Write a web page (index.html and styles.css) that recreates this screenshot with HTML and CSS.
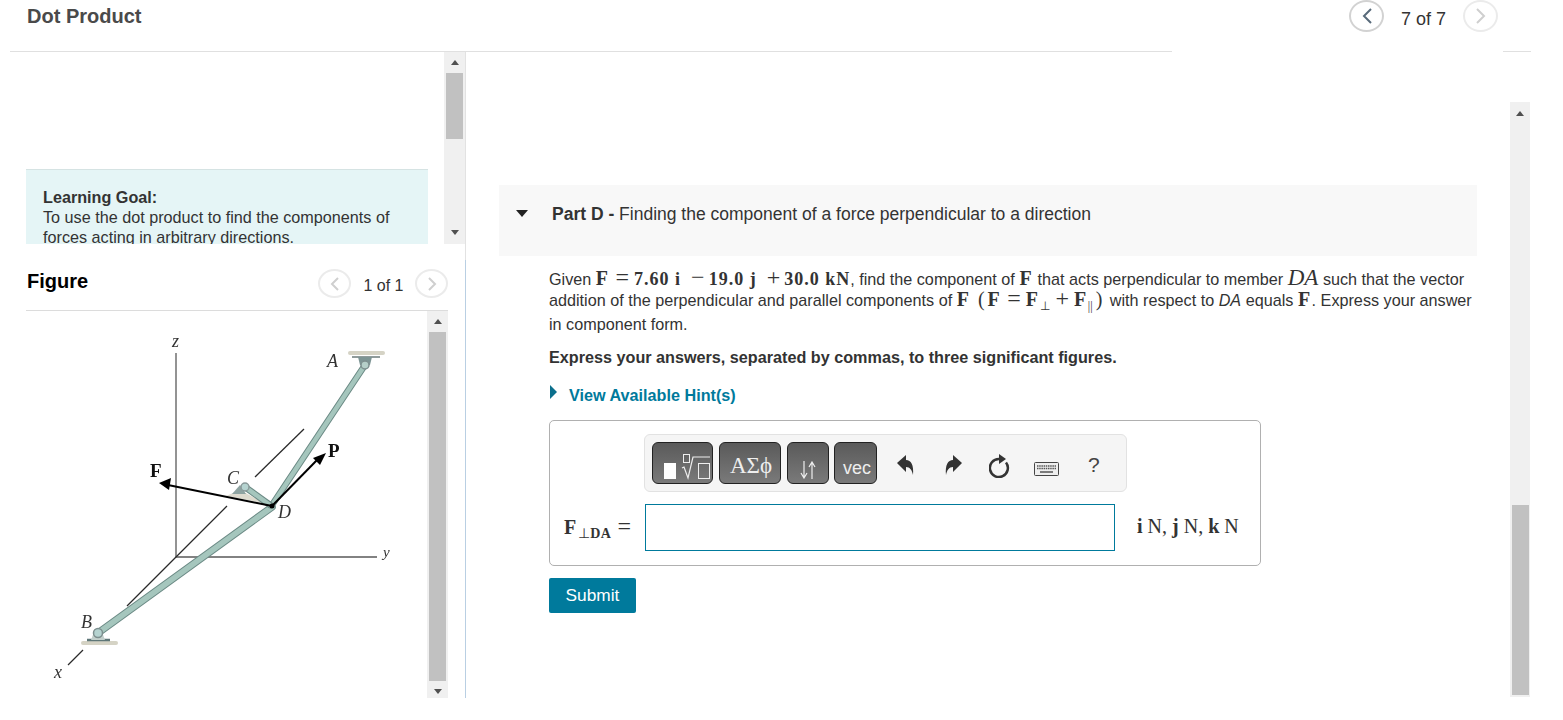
FILE: index.html
```html
<!DOCTYPE html>
<html lang="en">
<head>
    <meta charset="UTF-8">
    <meta name="viewport" content="width=device-width, initial-scale=1.0">
    <title>Dot Product</title>
    <link rel="stylesheet" href="styles.css">
</head>
<body>
    <header class="top-bar">
        <div class="top-title"><h1>Dot Product</h1></div>
        <div class="top-pager">
            <span class="circle circle-active">
                <svg width="12" height="18" viewBox="0 0 12 18"><path d="M10 2 3 9l7 7" fill="none" stroke="#586a7a" stroke-width="2"/></svg>
            </span>
            <span class="pager-count">7 of 7</span>
            <span class="circle">
                <svg width="12" height="18" viewBox="0 0 12 18"><path d="m2 2 7 7-7 7" fill="none" stroke="#cfcfcf" stroke-width="2"/></svg>
            </span>
        </div>
        <div class="top-end"></div>
    </header>

    <div class="main">
        <aside class="left">
            <div class="intro-wrap">
                <div class="intro">
                    <div class="intro-view">
                        <div class="goal">
                            <strong>Learning Goal:</strong><br>
                            To use the dot product to find the components of<br>
                            forces acting in arbitrary directions.
                        </div>
                    </div>
                    <div class="scrollbar intro-scroll">
                        <span class="arrow-up"></span>
                        <span class="thumb"></span>
                        <span class="scroll-fill"></span>
                        <span class="arrow-down"></span>
                    </div>
                </div>
            </div>

            <div class="figure">
                <div class="figure-head">
                    <h2>Figure</h2>
                    <div class="figure-pager">
                        <span class="circle small">
                            <svg width="10" height="14" viewBox="0 0 10 14"><path d="M8 1 2 7l6 6" fill="none" stroke="#cfcfcf" stroke-width="2"/></svg>
                        </span>
                        <span class="figure-count">1 of 1</span>
                        <span class="circle small">
                            <svg width="10" height="14" viewBox="0 0 10 14"><path d="m2 1 6 6-6 6" fill="none" stroke="#cfcfcf" stroke-width="2"/></svg>
                        </span>
                    </div>
                </div>
                <div class="figure-body">
                    <svg class="diagram" width="401" height="387" viewBox="26 311 401 387">
                        <!-- axes -->
                        <path d="M176 353V557H377" stroke="#5a5a5a" stroke-width="1.300" fill="none"/>
                        <g stroke="#2a2a2a" stroke-width="1.300" fill="none">
                            <path d="M227 506 176 557 127 606"/>
                            <path d="M83 650 68 665"/>
                            <path d="M255 477 304 429"/>
                        </g>
                        <!-- supports -->
                        <rect x="348" y="351" width="37" height="4" rx="2" fill="#d5d3c5"/>
                        <path d="M352 357H380" stroke="#6b7a7a" stroke-width="1.500"/>
                        <path d="M358 357h14l-2 8h-10z" fill="#7d9494"/>
                        <rect x="81" y="641" width="37" height="4" rx="2" fill="#d5d3c5"/>
                        <path d="M87 640h23" stroke="#5f7778" stroke-width="2.500"/>
                        <path d="M91 640l3-8h8l3 8z" fill="#c2cfcb"/>
                        <path d="M226 496 240 490 264 503Z" fill="#dedbcf"/>
                        <path d="M232 494l8-9 6 9z" fill="#8ea3a1"/>
                        <!-- members -->
                        <g fill="none" stroke-linecap="round">
                            <path d="M365 365 272 505" stroke="#6b8a85" stroke-width="6.500"/>
                            <path d="M365 365 272 505" stroke="#a5c6bd" stroke-width="4.500"/>
                            <path d="M98 633 272 507" stroke="#6b8a85" stroke-width="7.500"/>
                            <path d="M98 633 272 507" stroke="#a5c6bd" stroke-width="5.500"/>
                            <path d="M245 487 270 505" stroke="#6b8a85" stroke-width="6.500"/>
                            <path d="M245 487 270 505" stroke="#a5c6bd" stroke-width="4.500"/>
                        </g>
                        <circle cx="365" cy="365" r="4" fill="#b5cfc9" stroke="#7d8f8f" stroke-width="1.500"/>
                        <circle cx="98" cy="633" r="4.500" fill="#b5d3d0" stroke="#7d8f8f" stroke-width="1.500"/>
                        <circle cx="245" cy="487" r="4" fill="#b5d3d0" stroke="#8a9a9a" stroke-width="1.500"/>
                        <!-- forces -->
                        <g stroke="#000" stroke-width="2" fill="none">
                            <path d="M272 506 168 485"/>
                            <path d="M272 506 318 459"/>
                        </g>
                        <path d="M159 483 171 478 169 490z" fill="#000"/>
                        <path d="M326 453 320 465 313 458z" fill="#000"/>
                        <circle cx="272" cy="506" r="2.500" fill="#000"/>
                        <!-- labels -->
                        <g class="fig-label">
                            <text x="172" y="347">z</text>
                            <text x="327" y="367">A</text>
                            <text x="227" y="484">C</text>
                            <text x="278" y="518">D</text>
                            <text class="fig-small" x="383" y="557">y</text>
                            <text x="81" y="628">B</text>
                            <text x="54" y="678">x</text>
                        </g>
                        <g class="fig-force">
                            <text x="150" y="477">F</text>
                            <text x="328" y="457">P</text>
                        </g>
                    </svg>
                    <div class="scrollbar figure-scroll">
                        <span class="arrow-up"></span>
                        <span class="thumb"></span>
                        <span class="arrow-down"></span>
                    </div>
                </div>
            </div>
        </aside>

        <section class="right">
            <div class="content">
                <div class="part-head">
                    <span class="part-toggle"></span>
                    <span class="part-title"><strong>Part D -</strong> Finding the component of a force perpendicular to a direction</span>
                </div>
                <div class="part-body">
                    <div class="prompt-line">Given <b class="m cap">F</b><span class="op">=</span><b class="m">7.60 i</b><span class="op wide">&minus;</span><b class="m">19.0 j</b><span class="op wide">+</span><b class="m">30.0 kN</b>, find the component of <b class="m cap">F</b> that acts perpendicular to member <i class="mi">DA</i> such that the vector</div>
                    <div class="prompt-line tall">addition of the perpendicular and parallel components of <b class="m cap">F</b> <span class="mt">(</span><b class="m cap">F</b><span class="op">=</span><b class="m cap">F</b><sub class="sub">&perp;</sub><span class="op">+</span><b class="m cap">F</b><sub class="sub">||</sub><span class="mt">)</span> with respect to <i>DA</i> equals <b class="m cap">F</b>. Express your answer</div>
                    <div class="prompt-line">in component form.</div>
                    <p class="instruction">Express your answers, separated by commas, to three significant figures.</p>
                    <div class="hint"><span class="hint-toggle"></span>View Available Hint(s)</div>

                    <div class="answer-box">
                        <div class="toolbar">
                            <span class="tool tool-templates">
                                <svg width="59" height="40" viewBox="0 0 59 40">
                                    <rect x="11" y="20" width="12" height="16" fill="#fff"/>
                                    <rect x="30.500" y="11.500" width="6" height="8" fill="none" stroke="#eee"/>
                                    <path d="M29 25l2-1 4 11 5-21h17" fill="none" stroke="#eee" stroke-width="1.200"/>
                                    <rect x="45.500" y="20.500" width="11" height="15" fill="none" stroke="#eee"/>
                                </svg>
                            </span>
                            <span class="tool tool-greek">&Alpha;&Sigma;&#981;</span>
                            <span class="tool tool-arrows">
                                <svg width="18" height="18" viewBox="0 0 18 18">
                                    <path d="M5 0v17M2 12l3 5 3-5M13 18V1M10 6l3-5 3 5" fill="none" stroke="#eee" stroke-width="1.200"/>
                                </svg>
                            </span>
                            <span class="tool tool-vec">vec</span>
                            <svg class="action action-undo" width="17" height="20" viewBox="0 0 17 20"><path d="M0 8 9 0v5c5 0 8 5 7 15-1-5-3-8-7-8v5z" fill="#333"/></svg>
                            <svg class="action action-redo" width="17" height="20" viewBox="0 0 17 20"><path d="M17 8 8 0v5C3 5 0 10 1 20c1-5 3-8 7-8v5z" fill="#333"/></svg>
                            <svg class="action action-reset" width="22" height="24" viewBox="0 0 22 24"><path d="M17 8.500A9 9 0 1 1 10 5" fill="none" stroke="#333" stroke-width="2.500"/><path d="M10 0l7 5-7 5z" fill="#333"/></svg>
                            <svg class="action action-keys" width="25" height="14" viewBox="0 0 25 14">
                                <rect x=".5" y=".5" width="24" height="13" rx="1" fill="#eee" stroke="#444"/>
                                <path d="M3 4h19M3 6.500h19" stroke="#555" stroke-width="1.500" stroke-dasharray="1.500 .7"/>
                                <path d="M6 10h13" stroke="#555" stroke-width="1.500"/>
                            </svg>
                            <span class="tool-help">?</span>
                        </div>
                        <div class="answer-row">
                            <span class="answer-label"><b class="m cap">F</b><sub class="label-sub">&perp;<b>DA</b></sub><span class="op">=</span></span>
                            <input class="answer-input" type="text">
                            <span class="answer-units"><b>i</b> N, <b>j</b> N, <b>k</b> N</span>
                        </div>
                    </div>

                    <button class="submit" type="button">Submit</button>
                </div>
            </div>
            <div class="scrollbar page-scroll">
                <span class="arrow-up"></span>
                <span class="scroll-fill"></span>
                <span class="thumb"></span>
            </div>
        </section>
    </div>
</body>
</html>
```

FILE: styles.css
```css
html, body {
    margin: 0;
    padding: 0;
    height: 720px;
    overflow: hidden;
    background: #fff;
    font-family: "Liberation Sans", Arial, sans-serif;
    font-size: 16.200px;
    color: #333;
}

/* Top bar */
.top-bar {
    display: flex;
    height: 52px;
    padding-left: 10px;
    box-sizing: border-box;
}

.top-title {
    width: 1162px;
    padding-left: 17px;
    box-sizing: border-box;
    border-bottom: 1px solid #e0e0e0;
}

h1 {
    margin: 4px 0 0;
    font-size: 20px;
    line-height: 24px;
    color: #4a4a4a;
}

.top-pager {
    display: flex;
    align-items: flex-start;
    width: 331px;
    padding-left: 177px;
    box-sizing: border-box;
}

.top-end {
    width: 28px;
    border-bottom: 1px solid #e0e0e0;
}

.circle {
    display: flex;
    align-items: center;
    justify-content: center;
    width: 35px;
    height: 32px;
    box-sizing: border-box;
    border: 2px solid #ebebeb;
    border-radius: 50%;
    flex: none;
}

.circle-active {
    border-color: #d2d2d2;
}

.circle.small {
    width: 33px;
    height: 29px;
}

.pager-count {
    width: 79px;
    text-align: center;
    font-size: 18px;
    line-height: 38px;
}

/* Left column */
.main {
    display: flex;
    height: 668px;
}

.left {
    width: 466px;
    height: 646px;
    flex: none;
}

.intro-wrap {
    height: 208px;
    box-sizing: border-box;
    border-right: 1px solid #e2e2e2;
}

.intro {
    display: flex;
    height: 192px;
}

.intro-view {
    width: 444px;
    height: 192px;
    padding: 117px 0 0 26px;
    box-sizing: border-box;
    overflow: hidden;
}

.goal {
    width: 402px;
    height: 75px;
    padding: 17px 0 0 17px;
    box-sizing: border-box;
    overflow: hidden;
    background: #e5f5f6;
    border-top: 1px solid #d5e3e3;
    line-height: 20px;
}

.scrollbar {
    display: flex;
    flex-direction: column;
    align-items: center;
    width: 21px;
    flex: none;
    box-sizing: border-box;
    background: #f0f0f0;
}

.scrollbar .thumb {
    display: block;
    width: 17px;
    background: #c1c1c1;
}

.scroll-fill {
    flex: 1;
}

.arrow-up,
.arrow-down {
    display: block;
    width: 0;
    height: 0;
    border-left: 4.500px solid transparent;
    border-right: 4.500px solid transparent;
}

.arrow-up {
    border-bottom: 5px solid #505050;
    margin: 8px 0 8px;
}

.arrow-down {
    border-top: 5px solid #505050;
    margin: 8px 0 9px;
}

.intro-scroll .thumb {
    height: 66px;
}

.figure {
    height: 438px;
    box-sizing: border-box;
    padding-left: 26px;
    border-right: 1px solid #b9cfe3;
}

.figure-head {
    display: flex;
    justify-content: space-between;
    width: 422px;
    height: 51px;
    box-sizing: border-box;
    border-bottom: 1px solid #dcdcdc;
}

h2 {
    margin: 9px 0 0 1px;
    font-size: 20px;
    line-height: 24px;
    color: #000;
}

.figure-pager {
    display: flex;
    align-items: flex-start;
    padding-top: 9px;
}

.figure-count {
    width: 64px;
    padding-left: 1px;
    box-sizing: border-box;
    text-align: center;
    font-size: 16px;
    line-height: 33px;
}

.figure-body {
    display: flex;
    height: 387px;
}

.diagram {
    display: block;
    flex: none;
    filter: blur(.35px);
}

.fig-label text {
    font-family: "Liberation Serif", serif;
    font-style: italic;
    font-size: 18px;
    fill: #333;
}

.fig-label .fig-small {
    font-size: 15px;
}

.fig-force text {
    font-family: "Liberation Serif", serif;
    font-weight: bold;
    font-size: 19px;
    fill: #111;
}

.figure-scroll {
    height: 387px;
    justify-content: space-between;
}

.figure-scroll .thumb {
    height: 349px;
}

.figure-scroll .arrow-down {
    margin: 8px 0 4px;
}

/* Right column */
.right {
    display: flex;
    flex: none;
    width: 1097px;
}

.content {
    width: 1044px;
    padding: 133px 33px 0;
    box-sizing: border-box;
    flex: none;
}

.part-head {
    display: flex;
    height: 71px;
    padding: 19px 0 0 17px;
    box-sizing: border-box;
    background: #f8f8f8;
    line-height: 20px;
}

.part-title {
    font-size: 17.500px;
}

.part-toggle {
    width: 0;
    height: 0;
    margin: 6px 24px 0 0;
    border-left: 6.500px solid transparent;
    border-right: 6.500px solid transparent;
    border-top: 7px solid #222;
}

.part-body {
    padding: 12px 0 0 50px;
}

.prompt-line {
    height: 21px;
    line-height: 21px;
    white-space: nowrap;
}

.prompt-line.tall {
    height: 25px;
}

.m {
    font-family: "Liberation Serif", serif;
    font-size: 18px;
    letter-spacing: 1px;
}

.m.cap {
    font-size: 20px;
    letter-spacing: 1.500px;
}

.mt {
    font-family: "Liberation Serif", serif;
    font-size: 20px;
    margin: 0 3px;
}

.op {
    font-family: "Liberation Serif", serif;
    font-size: 24px;
    line-height: 0;
    margin: 0 5px 0 6px;
}

.op.wide {
    margin: 0 4px 0 10px;
}

.mi {
    font-family: "Liberation Serif", serif;
    font-size: 23px;
    line-height: 0;
}

.sub {
    font-family: "Liberation Serif", serif;
    font-size: 12px;
    line-height: 0;
}

.instruction {
    margin: 12px 0 0;
    font-weight: bold;
    line-height: 20px;
}

.hint {
    display: flex;
    margin-top: 18px;
    font-weight: bold;
    line-height: 20px;
    color: #007a9c;
}

.hint-toggle {
    width: 0;
    height: 0;
    margin: 0 12px 0 1px;
    border-top: 7px solid transparent;
    border-bottom: 7px solid transparent;
    border-left: 7px solid #0b6f8c;
}

.answer-box {
    width: 712px;
    height: 146px;
    margin-top: 15px;
    box-sizing: border-box;
    border: 1px solid #b0b0b0;
    border-radius: 5px;
    padding: 13px 0 0 94px;
}

.toolbar {
    display: flex;
    align-items: center;
    width: 483px;
    height: 58px;
    box-sizing: border-box;
    padding-left: 7px;
    background: #f5f5f5;
    border: 1px solid #e2e2e2;
    border-radius: 6px;
}

.tool {
    display: flex;
    align-items: center;
    justify-content: center;
    height: 42px;
    box-sizing: border-box;
    border: 1px solid #222;
    border-radius: 6px;
    background: linear-gradient(#5a5a5a, #7a7a7a);
    color: #eee;
    flex: none;
}

.tool-templates {
    width: 61px;
    margin-right: 6px;
}

.tool-greek {
    width: 62px;
    margin-right: 6px;
    padding: 6px 0 0 2px;
    font-family: "Liberation Serif", serif;
    font-size: 23px;
}

.tool-arrows {
    width: 42px;
    margin-right: 5px;
    padding-top: 13px;
}

.tool-vec {
    width: 43px;
    padding: 10px 0 0 3px;
    font-size: 18px;
}

.action {
    flex: none;
    margin-top: 4px;
}

.action-undo {
    margin-left: 20px;
}

.action-redo {
    margin-left: 31px;
}

.action-reset {
    margin-left: 27px;
    margin-top: 6px;
}

.action-keys {
    margin-left: 23px;
    margin-top: 12px;
}

.tool-help {
    margin-left: 29px;
    font-size: 21px;
    margin-top: 3px;
    color: #444;
}

.answer-row {
    display: flex;
    align-items: center;
    height: 47px;
    margin: 12px 0 0 -80px;
}

.answer-label {
    width: 81px;
    flex: none;
    white-space: nowrap;
}

.label-sub {
    font-family: "Liberation Serif", serif;
    font-size: 14px;
    line-height: 0;
    letter-spacing: .5px;
}

.answer-input {
    width: 470px;
    height: 47px;
    box-sizing: border-box;
    flex: none;
    border: 1px solid #007a9c;
    background: #fff;
    outline: none;
}

.answer-units {
    margin: -2px 0 0 22px;
    font-family: "Liberation Serif", serif;
    font-size: 20px;
    white-space: nowrap;
}

.submit {
    display: block;
    width: 87px;
    height: 35px;
    margin-top: 12px;
    border: 0;
    border-radius: 2px;
    background: #007a9c;
    color: #fff;
    font-family: "Liberation Sans", Arial, sans-serif;
    font-size: 17.300px;
}

.page-scroll {
    width: 20px;
    height: 595px;
    margin-top: 50px;
}

.page-scroll .arrow-up {
    margin-top: 9px;
}

.page-scroll .thumb {
    height: 190px;
    margin-bottom: 2px;
}
```
